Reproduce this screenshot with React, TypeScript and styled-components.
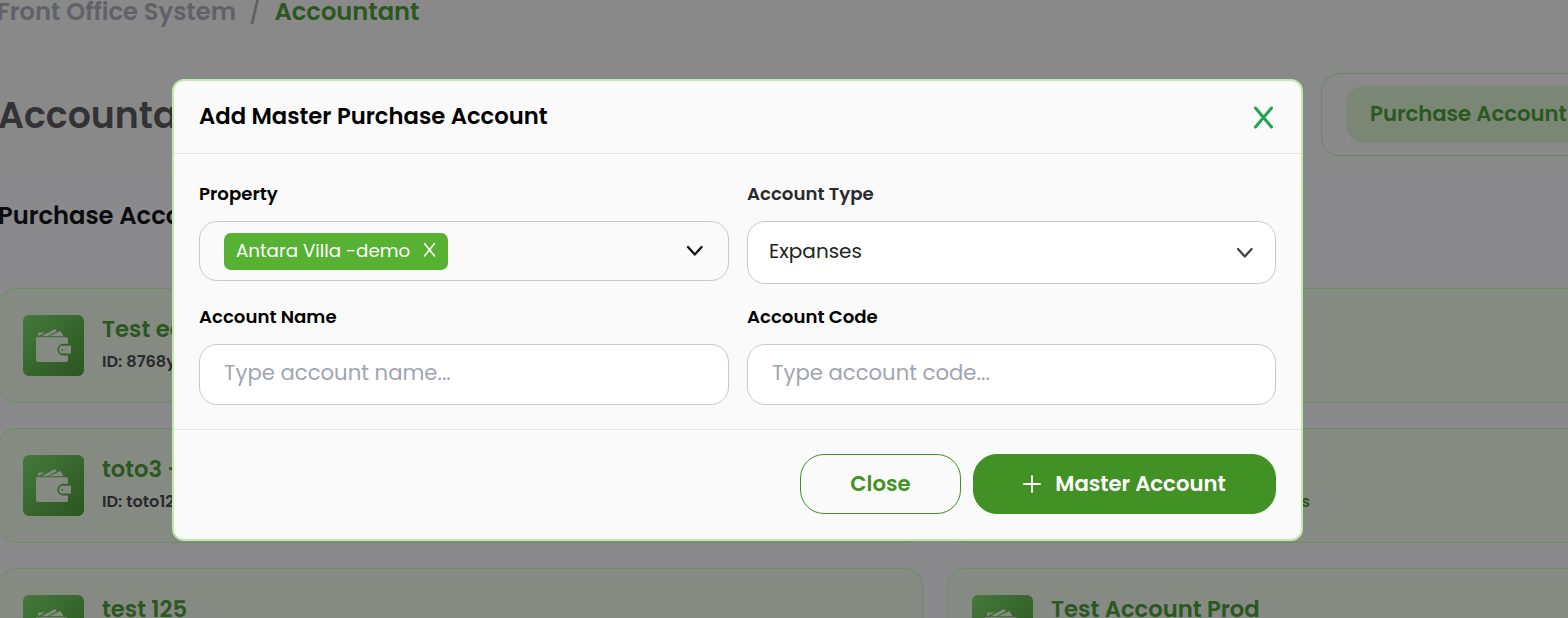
import React from 'react';
import styled, { createGlobalStyle } from 'styled-components';

const GlobalStyle = createGlobalStyle`
  * { box-sizing: border-box; }
  body { margin: 0; overflow: hidden; background: #8a898c; font-family: "Poppins", "Inter", sans-serif; }
  button, input { font-family: inherit; margin: 0; }
`;

const Page = styled.div`
  position: relative;
  height: 618px;
  overflow: hidden;
  white-space: nowrap;
`;

const TopArea = styled.header`
  height: 180px;
  background: #89898a;
`;

const Breadcrumb = styled.nav`
  display: flex;
  gap: 13px;
  margin-left: -3px;
  height: 73px;
  font-size: 24.2px;
  line-height: 24px;
  font-weight: 600;
  color: #616167;
`;

const Slash = styled.span`
  font-weight: 500;
`;

const Current = styled.span`
  color: #2b5720;
`;

const TitleRow = styled.div`
  display: flex;
  justify-content: space-between;
`;

const PageTitle = styled.h1`
  margin: 0 0 0 -2px;
  font-size: 36.3px;
  font-weight: 600;
  line-height: 85px;
  color: #333335;
`;

const TabBar = styled.div`
  width: 420px;
  height: 83px;
  margin-right: -173px;
  padding: 12px 24px;
  border: 1px solid #6d8567;
  border-radius: 18px;
`;

const Tab = styled.div`
  width: 260px;
  height: 57px;
  padding-left: 24px;
  border-radius: 18px;
  background: #7b8775;
  color: #2b5720;
  font-size: 21.2px;
  font-weight: 600;
  line-height: 56px;
`;

const SectionTitle = styled.h2`
  margin: 0 0 0 -2px;
  height: 108px;
  font-size: 24.2px;
  font-weight: 600;
  line-height: 72px;
  color: #0b0b0d;
`;

const CardGrid = styled.div`
  display: grid;
  grid-template-columns: 925px 925px;
  gap: 25px 24px;
  margin-left: -2px;
`;

const Card = styled.article`
  display: flex;
  gap: 18px;
  height: 115px;
  padding: 26px 24px;
  border: 1px solid #6d8c65;
  border-radius: 18px;
  background: #858a83;
`;

const IconTile = styled.div`
  flex: none;
  width: 61px;
  height: 61px;
  border-radius: 6px;
  overflow: hidden;
  background: linear-gradient(135deg, #45793a, #2a5520);
`;

const CardText = styled.div`
  flex: 1;
`;

const CardTitle = styled.h3`
  margin: 0;
  font-size: 22.7px;
  font-weight: 600;
  line-height: 29px;
  color: #2b5720;
`;

const CardMeta = styled.div`
  display: flex;
  margin-top: 5px;
  font-size: 16.2px;
  font-weight: 600;
  line-height: 26px;
  color: #29292d;
`;

const CardKind = styled.span`
  width: 259px;
  text-align: right;
  color: #2b5720;
`;

const Modal = styled.section`
  position: absolute;
  left: 172px;
  top: 79px;
  width: 1131px;
  height: 462px;
  border: 2px solid #bfe9a9;
  border-radius: 12px;
  background: #fafafa;
  overflow: hidden;
`;

const ModalHeader = styled.div`
  display: flex;
  align-items: center;
  justify-content: space-between;
  height: 73px;
  padding: 0 27px 0 25px;
  border-bottom: 1px solid #e4e4e6;
  font-size: 22.7px;
  font-weight: 600;
  color: #000;
`;

const ModalTitle = styled.span`
  padding-bottom: 3px;
`;

const CloseIcon = styled.button`
  display: flex;
  padding: 0;
  border: 0;
  background: none;
`;

const Form = styled.div`
  display: grid;
  grid-template-columns: 530px 529px;
  grid-template-rows: 123px 1fr;
  column-gap: 18px;
  height: 275px;
  padding: 25px 25px 0;
`;

const Label = styled.label<{ $soft?: boolean }>`
  display: block;
  height: 42px;
  font-size: 18.15px;
  font-weight: 600;
  line-height: 29px;
  color: ${(p) => (p.$soft ? '#2a2a2c' : '#000')};
`;

const Box = styled.div<{ $tall?: boolean; $plain?: boolean }>`
  display: flex;
  align-items: center;
  justify-content: space-between;
  height: ${(p) => (p.$tall ? 63 : 60)}px;
  padding: ${(p) => (p.$tall ? '0 21px' : '0 24px')};
  border: 1px solid #c9c9c9;
  border-radius: 18px;
  background: ${(p) => (p.$plain ? 'transparent' : '#fff')};
  font-size: 20px;
  color: #222;
`;

const Selected = styled.span`
  padding-bottom: 4px;
`;

const Input = styled.input`
  display: block;
  width: 100%;
  height: 61px;
  padding: 0 24px 4px;
  border: 1px solid #c9c9c9;
  border-radius: 18px;
  background: #fff;
  font-size: 21.2px;
  outline: 0;
  &::placeholder { color: #a0a5b1; opacity: 1; }
`;

const Chip = styled.span`
  display: flex;
  align-items: center;
  gap: 13px;
  height: 37px;
  padding: 0 12px 2px;
  border-radius: 7px;
  background: #57b132;
  color: #fff;
  font-size: 18.25px;
`;

const ModalFooter = styled.div`
  display: flex;
  justify-content: flex-end;
  gap: 12px;
  height: 110px;
  padding: 24px 25px;
  border-top: 1px solid #e4e4e6;
`;

const Button = styled.button<{ $primary?: boolean }>`
  display: flex;
  align-items: center;
  justify-content: center;
  gap: 14px;
  width: ${(p) => (p.$primary ? 303 : 161)}px;
  height: 60px;
  padding: 0 0 2px;
  border: 1px solid #429125;
  border-radius: 24px;
  background: ${(p) => (p.$primary ? '#429125' : 'transparent')};
  color: ${(p) => (p.$primary ? '#fff' : '#429125')};
  font-size: 21.2px;
  font-weight: 600;
`;

const PlusIcon = styled.svg`
  margin-top: 2px;
`;

const Wallet = () => (
  <svg width="61" height="61" viewBox="0 0 61 61" fill="#858a83">
    <path d="M15 17.5h7L15 21.2zM18.5 21.2L32 14l1.8 2.2-9.3 5zM26 21.2L37.5 16l3 5.2z" />
    <path d="M13 22.3h30q2 0 2 2v4.5h-4.7a5.9 5.9 0 0 0 0 11.8H45V45q0 2-2 2H15q-2 0-2-2z" />
    <path fillRule="evenodd" d="M40 30.8h8v7.8h-8a3.9 3.9 0 0 1 0-7.8zM39.4 34a.8.8 0 1 0 .01 0z" />
  </svg>
);

const Chevron = ({ color }: { color: string }) => (
  <svg width="18" height="12" viewBox="0 0 18 12" fill="none" stroke={color} strokeWidth="2.3" strokeLinecap="round" strokeLinejoin="round">
    <path d="M2 2l6.8 7.5L15.6 2" />
  </svg>
);

const cards = [
  { title: 'Test edit', id: '8768y' },
  { title: '', id: '' },
  { title: 'toto3 - test', id: 'toto123' },
  { title: '', id: '', kind: 'Expanses' },
  { title: 'test 125', id: '125' },
  { title: 'Test Account Prod', id: '126' },
];

export default function App() {
  return (
    <Page>
      <GlobalStyle />
      <TopArea>
        <Breadcrumb>
          <span>Front Office System</span>
          <Slash>/</Slash>
          <Current>Accountant</Current>
        </Breadcrumb>
        <TitleRow>
          <PageTitle>Accountant</PageTitle>
          <TabBar>
            <Tab>Purchase Account</Tab>
          </TabBar>
        </TitleRow>
      </TopArea>
      <SectionTitle>Purchase Account</SectionTitle>
      <CardGrid>
        {cards.map((c, i) => (
          <Card key={i}>
            <IconTile><Wallet /></IconTile>
            <CardText>
              <CardTitle>{c.title || '\u00a0'}</CardTitle>
              <CardMeta>
                {c.id && <span>ID: {c.id}</span>}
                {c.kind && <CardKind>{c.kind}</CardKind>}
              </CardMeta>
            </CardText>
          </Card>
        ))}
      </CardGrid>

      <Modal>
        <ModalHeader>
          <ModalTitle>Add Master Purchase Account</ModalTitle>
          <CloseIcon aria-label="Close">
            <svg width="21" height="23" viewBox="0 0 21 23" fill="none" stroke="#1fa650" strokeWidth="3" strokeLinecap="round">
              <path d="M2.5 2l16 19M18.5 2l-16 19" />
            </svg>
          </CloseIcon>
        </ModalHeader>
        <Form>
          <div>
            <Label>Property</Label>
            <Box $plain>
              <Chip>
                <span>Antara Villa -demo</span>
                <svg width="13" height="16" viewBox="0 0 13 16" fill="none" stroke="#fff" strokeWidth="1.6" strokeLinecap="round">
                  <path d="M1.5 1.5l10 12.5M11.5 1.5L1.5 14" />
                </svg>
              </Chip>
              <Chevron color="#111" />
            </Box>
          </div>
          <div>
            <Label $soft>Account Type</Label>
            <Box $tall>
              <Selected>Expanses</Selected>
              <Chevron color="#444" />
            </Box>
          </div>
          <div>
            <Label>Account Name</Label>
            <Input placeholder="Type account name..." />
          </div>
          <div>
            <Label>Account Code</Label>
            <Input placeholder="Type account code..." />
          </div>
        </Form>
        <ModalFooter>
          <Button>Close</Button>
          <Button $primary>
            <PlusIcon width="18" height="18" viewBox="0 0 18 18" fill="none" stroke="#fff" strokeWidth="1.8" strokeLinecap="round">
              <path d="M9 1v16M1 9h16" />
            </PlusIcon>
            <span>Master Account</span>
          </Button>
        </ModalFooter>
      </Modal>
    </Page>
  );
}
